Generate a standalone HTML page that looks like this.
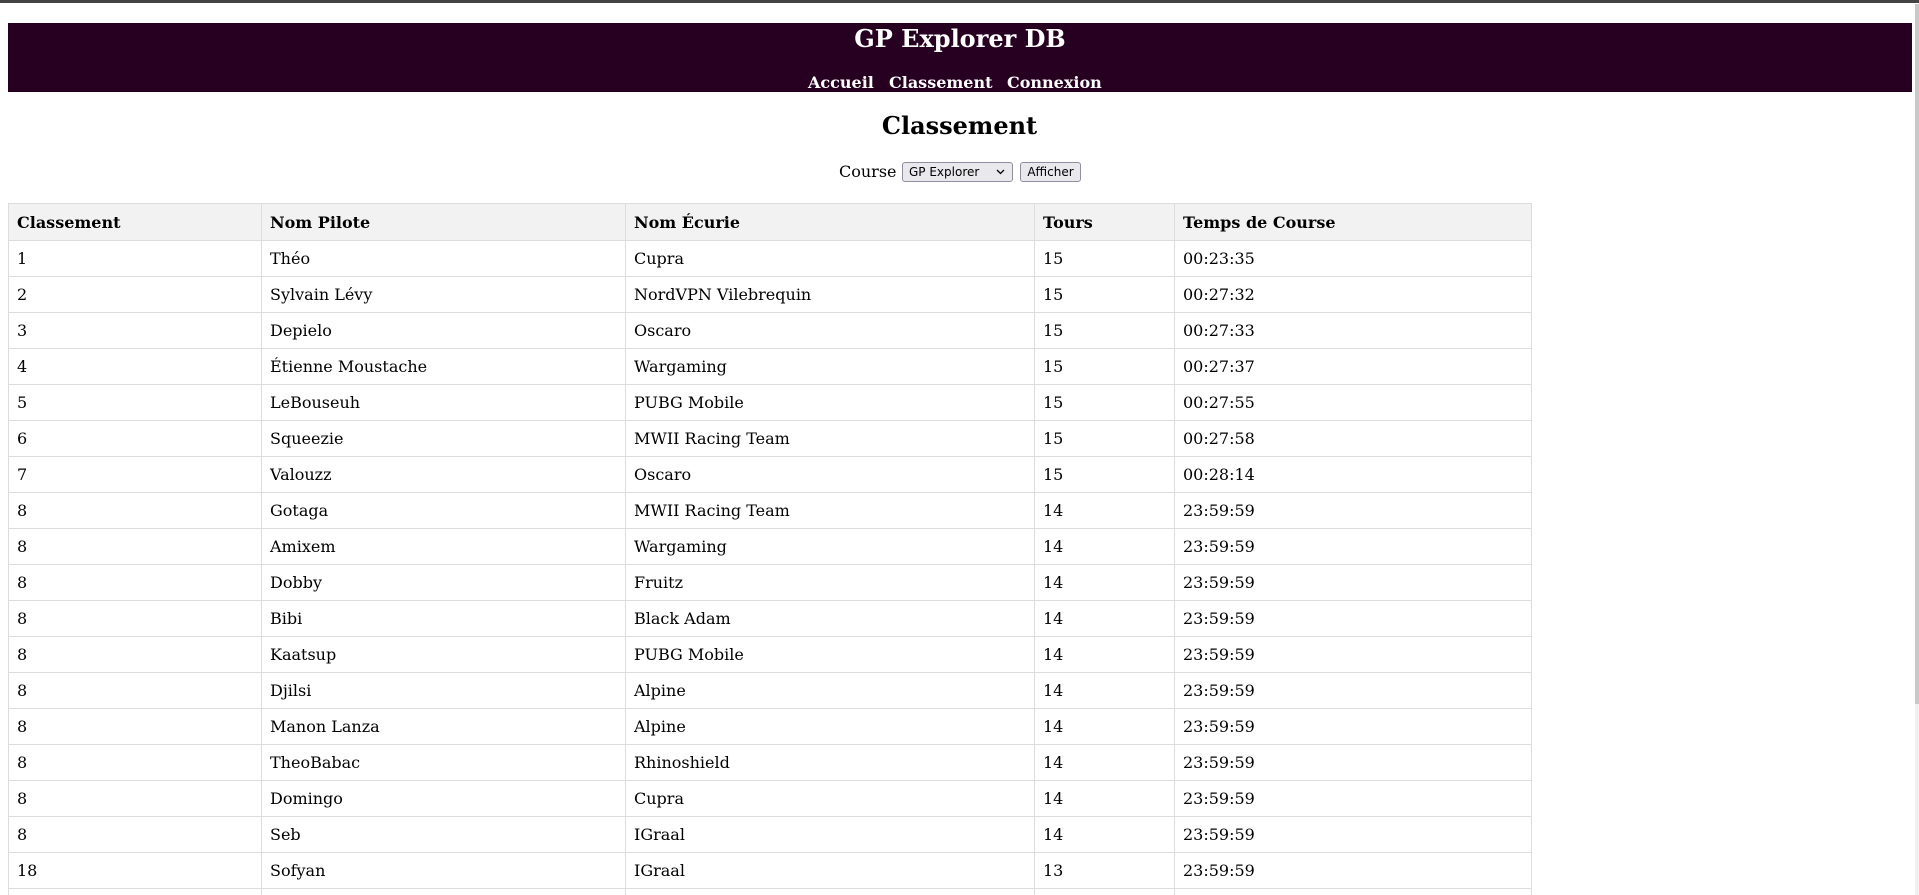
<!DOCTYPE html>
<html><head><meta charset="utf-8"><style>
html,body{margin:0;padding:0;width:1919px;height:895px;overflow:hidden;background:#fff;font-family:"DejaVu Serif","Liberation Serif",serif;color:#000;}
#wrap{position:relative;width:1919px;height:895px;overflow:hidden;}
.topbar{position:absolute;left:0;top:0;width:1919px;height:3px;background:#444;}
.sb{position:absolute;left:1915px;top:4px;width:4px;height:891px;background:#f0f0f0;}
.sbt{position:absolute;left:1915px;top:4px;width:4px;height:700px;background:#c8c8c8;}
.hdr{position:absolute;left:8px;top:23px;width:1904px;height:69px;background:#270021;}
.t{position:absolute;left:0;width:1904px;text-align:center;color:#fff;font-weight:bold;}
.n{position:absolute;top:50px;color:#fff;font-weight:bold;font-size:16px;line-height:19px;white-space:nowrap;}
.h2{position:absolute;left:0;top:112px;width:1919px;text-align:center;font-weight:bold;font-size:24px;line-height:28px;}
.form{position:absolute;left:0;top:162px;width:1919px;height:21px;}
.lbl{position:absolute;left:839px;top:0;font-size:16px;line-height:19px;}
.sel{position:absolute;left:902px;top:0;width:109px;height:18px;border:1px solid #8f8f9d;border-radius:3px;background:#e9e9ed;font:12px "DejaVu Sans","Liberation Sans",sans-serif;line-height:18px;}
.sel span{position:absolute;left:6px;top:0;}
.sel svg{position:absolute;right:7px;top:6px;}
.btn{position:absolute;left:1020px;top:0;width:59px;height:18px;border:1px solid #8f8f9d;border-radius:3px;background:#e9e9ed;font:12px "DejaVu Sans","Liberation Sans",sans-serif;line-height:18px;text-align:center;}
table{position:absolute;left:8px;top:203px;border-collapse:collapse;table-layout:fixed;width:1523px;}
td,th{border:1px solid #ddd;padding:8px;text-align:left;font-size:16px;line-height:19px;height:19px;white-space:nowrap;}
th{background:#f2f2f2;padding-top:9px;padding-bottom:8px;}
</style></head><body><div id="wrap">
<div class="topbar"></div>
<div class="sb"></div><div class="sbt"></div>
<div class="hdr">
<div class="t" style="top:2px;font-size:24px;line-height:28px;">GP Explorer DB</div>
<span class="n" style="left:800px">Accueil</span>
<span class="n" style="left:881px">Classement</span>
<span class="n" style="left:999px">Connexion</span>
</div>
<div class="h2">Classement</div>
<div class="form"><span class="lbl">Course</span><div class="sel"><span>GP Explorer</span><svg width="9" height="6" viewBox="0 0 9 6"><path d="M1 1 L4.5 4.5 L8 1" fill="none" stroke="#000" stroke-width="1.3"/></svg></div><div class="btn">Afficher</div></div>
<table>
<colgroup><col style="width:253px"><col style="width:364px"><col style="width:409px"><col style="width:140px"><col style="width:357px"></colgroup>
<tr><th>Classement</th><th>Nom Pilote</th><th>Nom Écurie</th><th>Tours</th><th>Temps de Course</th></tr>
<tr><td>1</td><td>Théo</td><td>Cupra</td><td>15</td><td>00:23:35</td></tr>
<tr><td>2</td><td>Sylvain Lévy</td><td>NordVPN Vilebrequin</td><td>15</td><td>00:27:32</td></tr>
<tr><td>3</td><td>Depielo</td><td>Oscaro</td><td>15</td><td>00:27:33</td></tr>
<tr><td>4</td><td>Étienne Moustache</td><td>Wargaming</td><td>15</td><td>00:27:37</td></tr>
<tr><td>5</td><td>LeBouseuh</td><td>PUBG Mobile</td><td>15</td><td>00:27:55</td></tr>
<tr><td>6</td><td>Squeezie</td><td>MWII Racing Team</td><td>15</td><td>00:27:58</td></tr>
<tr><td>7</td><td>Valouzz</td><td>Oscaro</td><td>15</td><td>00:28:14</td></tr>
<tr><td>8</td><td>Gotaga</td><td>MWII Racing Team</td><td>14</td><td>23:59:59</td></tr>
<tr><td>8</td><td>Amixem</td><td>Wargaming</td><td>14</td><td>23:59:59</td></tr>
<tr><td>8</td><td>Dobby</td><td>Fruitz</td><td>14</td><td>23:59:59</td></tr>
<tr><td>8</td><td>Bibi</td><td>Black Adam</td><td>14</td><td>23:59:59</td></tr>
<tr><td>8</td><td>Kaatsup</td><td>PUBG Mobile</td><td>14</td><td>23:59:59</td></tr>
<tr><td>8</td><td>Djilsi</td><td>Alpine</td><td>14</td><td>23:59:59</td></tr>
<tr><td>8</td><td>Manon Lanza</td><td>Alpine</td><td>14</td><td>23:59:59</td></tr>
<tr><td>8</td><td>TheoBabac</td><td>Rhinoshield</td><td>14</td><td>23:59:59</td></tr>
<tr><td>8</td><td>Domingo</td><td>Cupra</td><td>14</td><td>23:59:59</td></tr>
<tr><td>8</td><td>Seb</td><td>IGraal</td><td>14</td><td>23:59:59</td></tr>
<tr><td>18</td><td>Sofyan</td><td>IGraal</td><td>13</td><td>23:59:59</td></tr>
<tr><td>19</td><td>Maghla</td><td>Fruitz</td><td>13</td><td>23:59:59</td></tr>
</table>
</div></body></html>
